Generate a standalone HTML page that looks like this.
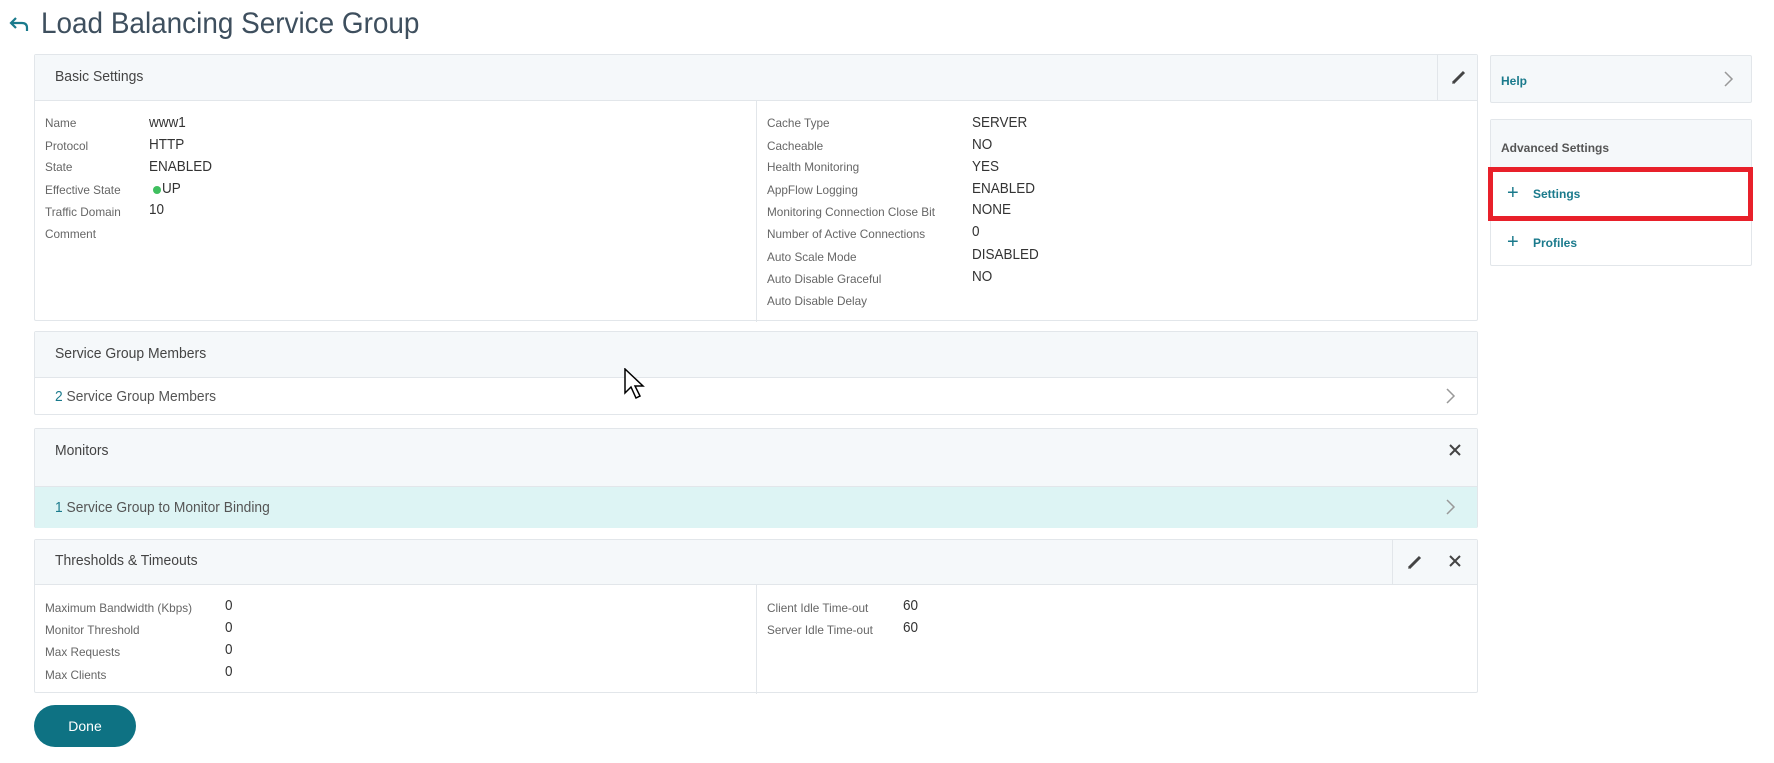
<!DOCTYPE html>
<html><head><meta charset="utf-8"><style>
*{margin:0;padding:0;box-sizing:border-box}
body{width:1774px;height:763px;background:#fff;position:relative;overflow:hidden;font-family:"Liberation Sans",sans-serif;color:#333}
.a{position:absolute;white-space:nowrap}
.panel{position:absolute;border:1px solid #e2e6ea;background:#fff;border-radius:2px}
.hd{position:absolute;left:0;right:0;top:0;background:#f5f8fa;border-bottom:1px solid #e2e6ea}
.ht{position:absolute;left:20px;font-size:15px;color:#444;transform:scaleX(0.93);transform-origin:left}
.lb{position:absolute;font-size:12px;color:#666;white-space:nowrap;transform:scaleX(0.98);transform-origin:left}
.vl{position:absolute;font-size:15px;color:#333;white-space:nowrap;transform:scaleX(0.9);transform-origin:left}
.vsep{position:absolute;width:1px;background:#e2e6ea}
.sq{transform:scaleX(0.92);transform-origin:left}
</style></head><body>
<svg class="a" style="left:8px;top:15px" width="22" height="18" viewBox="0 0 22 18"><path d="M8 3 L3 8 L8 13 M3 8 H14 Q19 8 19 13 V16" fill="none" stroke="#1a7a8c" stroke-width="2.2"/></svg>
<div class="a" style="left:41px;top:7px;font-size:30px;color:#3e4f5e;transform:scaleX(0.93);transform-origin:left">Load Balancing Service Group</div>

<div class="panel" style="left:34px;top:54px;width:1444px;height:267px">
 <div class="hd" style="height:46px"><div class="ht" style="top:13px">Basic Settings</div>
 <div class="vsep" style="left:1402px;top:0;height:46px"></div>
 <svg class="a" style="left:1414px;top:12px" width="20" height="20" viewBox="0 0 20 20"><path d="M4 16 L15 5" stroke="#444" stroke-width="3"/><path d="M3 17 L4 15 L5 16 Z" fill="#444"/></svg></div>
 <div class="vsep" style="left:721px;top:46px;height:221px"></div>
</div>
<div class="lb" style="left:45px;top:116px">Name</div><div class="vl" style="left:149px;top:114px">www1</div>
<div class="lb" style="left:45px;top:139px">Protocol</div><div class="vl" style="left:149px;top:136px">HTTP</div>
<div class="lb" style="left:45px;top:160px">State</div><div class="vl" style="left:149px;top:158px">ENABLED</div>
<div class="lb" style="left:45px;top:183px">Effective State</div><div class="a" style="left:153px;top:186px;width:8px;height:8px;border-radius:50%;background:#3fbf5f"></div><div class="vl" style="left:162px;top:180px">UP</div>
<div class="lb" style="left:45px;top:205px">Traffic Domain</div><div class="vl" style="left:149px;top:201px">10</div>
<div class="lb" style="left:45px;top:227px">Comment</div>

<div class="lb" style="left:767px;top:116px">Cache Type</div><div class="vl" style="left:972px;top:114px">SERVER</div>
<div class="lb" style="left:767px;top:139px">Cacheable</div><div class="vl" style="left:972px;top:136px">NO</div>
<div class="lb" style="left:767px;top:160px">Health Monitoring</div><div class="vl" style="left:972px;top:158px">YES</div>
<div class="lb" style="left:767px;top:183px">AppFlow Logging</div><div class="vl" style="left:972px;top:180px">ENABLED</div>
<div class="lb" style="left:767px;top:205px">Monitoring Connection Close Bit</div><div class="vl" style="left:972px;top:201px">NONE</div>
<div class="lb" style="left:767px;top:227px">Number of Active Connections</div><div class="vl" style="left:972px;top:223px">0</div>
<div class="lb" style="left:767px;top:250px">Auto Scale Mode</div><div class="vl" style="left:972px;top:246px">DISABLED</div>
<div class="lb" style="left:767px;top:272px">Auto Disable Graceful</div><div class="vl" style="left:972px;top:268px">NO</div>
<div class="lb" style="left:767px;top:294px">Auto Disable Delay</div>

<div class="panel" style="left:34px;top:331px;width:1444px;height:84px">
 <div class="hd" style="height:46px"><div class="ht" style="top:13px">Service Group Members</div></div>
 <div class="a sq" style="left:20px;top:56px;font-size:15px;color:#555"><span style="color:#1a7a8c">2</span> Service Group Members</div>
 <svg class="a" style="left:1410px;top:55px" width="12" height="18" viewBox="0 0 12 18"><path d="M2 2 L9 9 L2 16" fill="none" stroke="#999" stroke-width="1.5"/></svg>
</div>
<svg class="a" style="left:624px;top:368px" width="22" height="32" viewBox="0 0 22 32"><path d="M1 1 V25 L7 19 L12 30 L16 28 L11 18 H19 Z" fill="#fff" stroke="#000" stroke-width="1.5"/></svg>

<div class="panel" style="left:34px;top:428px;width:1444px;height:100px">
 <div class="hd" style="height:58px"><div class="ht" style="top:13px">Monitors</div>
 <svg class="a" style="left:1413px;top:14px" width="14" height="14" viewBox="0 0 14 14"><path d="M2 2 L12 12 M12 2 L2 12" stroke="#444" stroke-width="2"/></svg></div>
 <div class="a" style="left:0;right:0;top:58px;height:41px;background:#ddf4f4"></div>
 <div class="a sq" style="left:20px;top:70px;font-size:15px;color:#555"><span style="color:#1a7a8c">1</span> Service Group to Monitor Binding</div>
 <svg class="a" style="left:1410px;top:69px" width="12" height="18" viewBox="0 0 12 18"><path d="M2 2 L9 9 L2 16" fill="none" stroke="#999" stroke-width="1.5"/></svg>
</div>

<div class="panel" style="left:34px;top:539px;width:1444px;height:154px">
 <div class="hd" style="height:45px"><div class="ht" style="top:12px">Thresholds &amp; Timeouts</div>
 <div class="vsep" style="left:1357px;top:0;height:45px"></div>
 <svg class="a" style="left:1370px;top:12px" width="20" height="20" viewBox="0 0 20 20"><path d="M4 16 L15 5" stroke="#444" stroke-width="3"/><path d="M3 17 L4 15 L5 16 Z" fill="#444"/></svg>
 <svg class="a" style="left:1413px;top:14px" width="14" height="14" viewBox="0 0 14 14"><path d="M2 2 L12 12 M12 2 L2 12" stroke="#444" stroke-width="2"/></svg></div>
 <div class="vsep" style="left:721px;top:45px;height:109px"></div>
</div>
<div class="lb" style="left:45px;top:601px">Maximum Bandwidth (Kbps)</div><div class="vl" style="left:225px;top:597px">0</div>
<div class="lb" style="left:45px;top:623px">Monitor Threshold</div><div class="vl" style="left:225px;top:619px">0</div>
<div class="lb" style="left:45px;top:645px">Max Requests</div><div class="vl" style="left:225px;top:641px">0</div>
<div class="lb" style="left:45px;top:668px">Max Clients</div><div class="vl" style="left:225px;top:663px">0</div>
<div class="lb" style="left:767px;top:601px">Client Idle Time-out</div><div class="vl" style="left:903px;top:597px">60</div>
<div class="lb" style="left:767px;top:623px">Server Idle Time-out</div><div class="vl" style="left:903px;top:619px">60</div>

<div class="a" style="left:34px;top:705px;width:102px;height:42px;border-radius:21px;background:#0e7283;color:#fff;font-size:14px;text-align:center;line-height:42px">Done</div>

<div class="panel" style="left:1490px;top:55px;width:262px;height:48px;background:#f5f8fa">
 <div class="a" style="left:10px;top:18px;font-size:12px;color:#1a7a8c;font-weight:bold">Help</div>
 <svg class="a" style="left:232px;top:14px" width="12" height="18" viewBox="0 0 12 18"><path d="M2 2 L9 9 L2 16" fill="none" stroke="#999" stroke-width="1.5"/></svg>
</div>
<div class="panel" style="left:1490px;top:119px;width:262px;height:147px">
 <div class="a" style="left:0;right:0;top:0;height:48px;background:#f5f8fa"></div>
 <div class="a" style="left:10px;top:21px;font-size:12px;color:#555;font-weight:bold">Advanced Settings</div>
 <div class="a" style="left:16px;top:63px;font-size:20px;color:#1a7a8c;line-height:20px">+</div>
 <div class="a" style="left:42px;top:67px;font-size:12px;color:#1a7a8c;font-weight:bold">Settings</div>
 <div class="a" style="left:16px;top:112px;font-size:20px;color:#1a7a8c;line-height:20px">+</div>
 <div class="a" style="left:42px;top:116px;font-size:12px;color:#1a7a8c;font-weight:bold">Profiles</div>
</div>
<div class="a" style="left:1488px;top:167px;width:265px;height:54px;border:5px solid #e8202a"></div>
</body></html>
